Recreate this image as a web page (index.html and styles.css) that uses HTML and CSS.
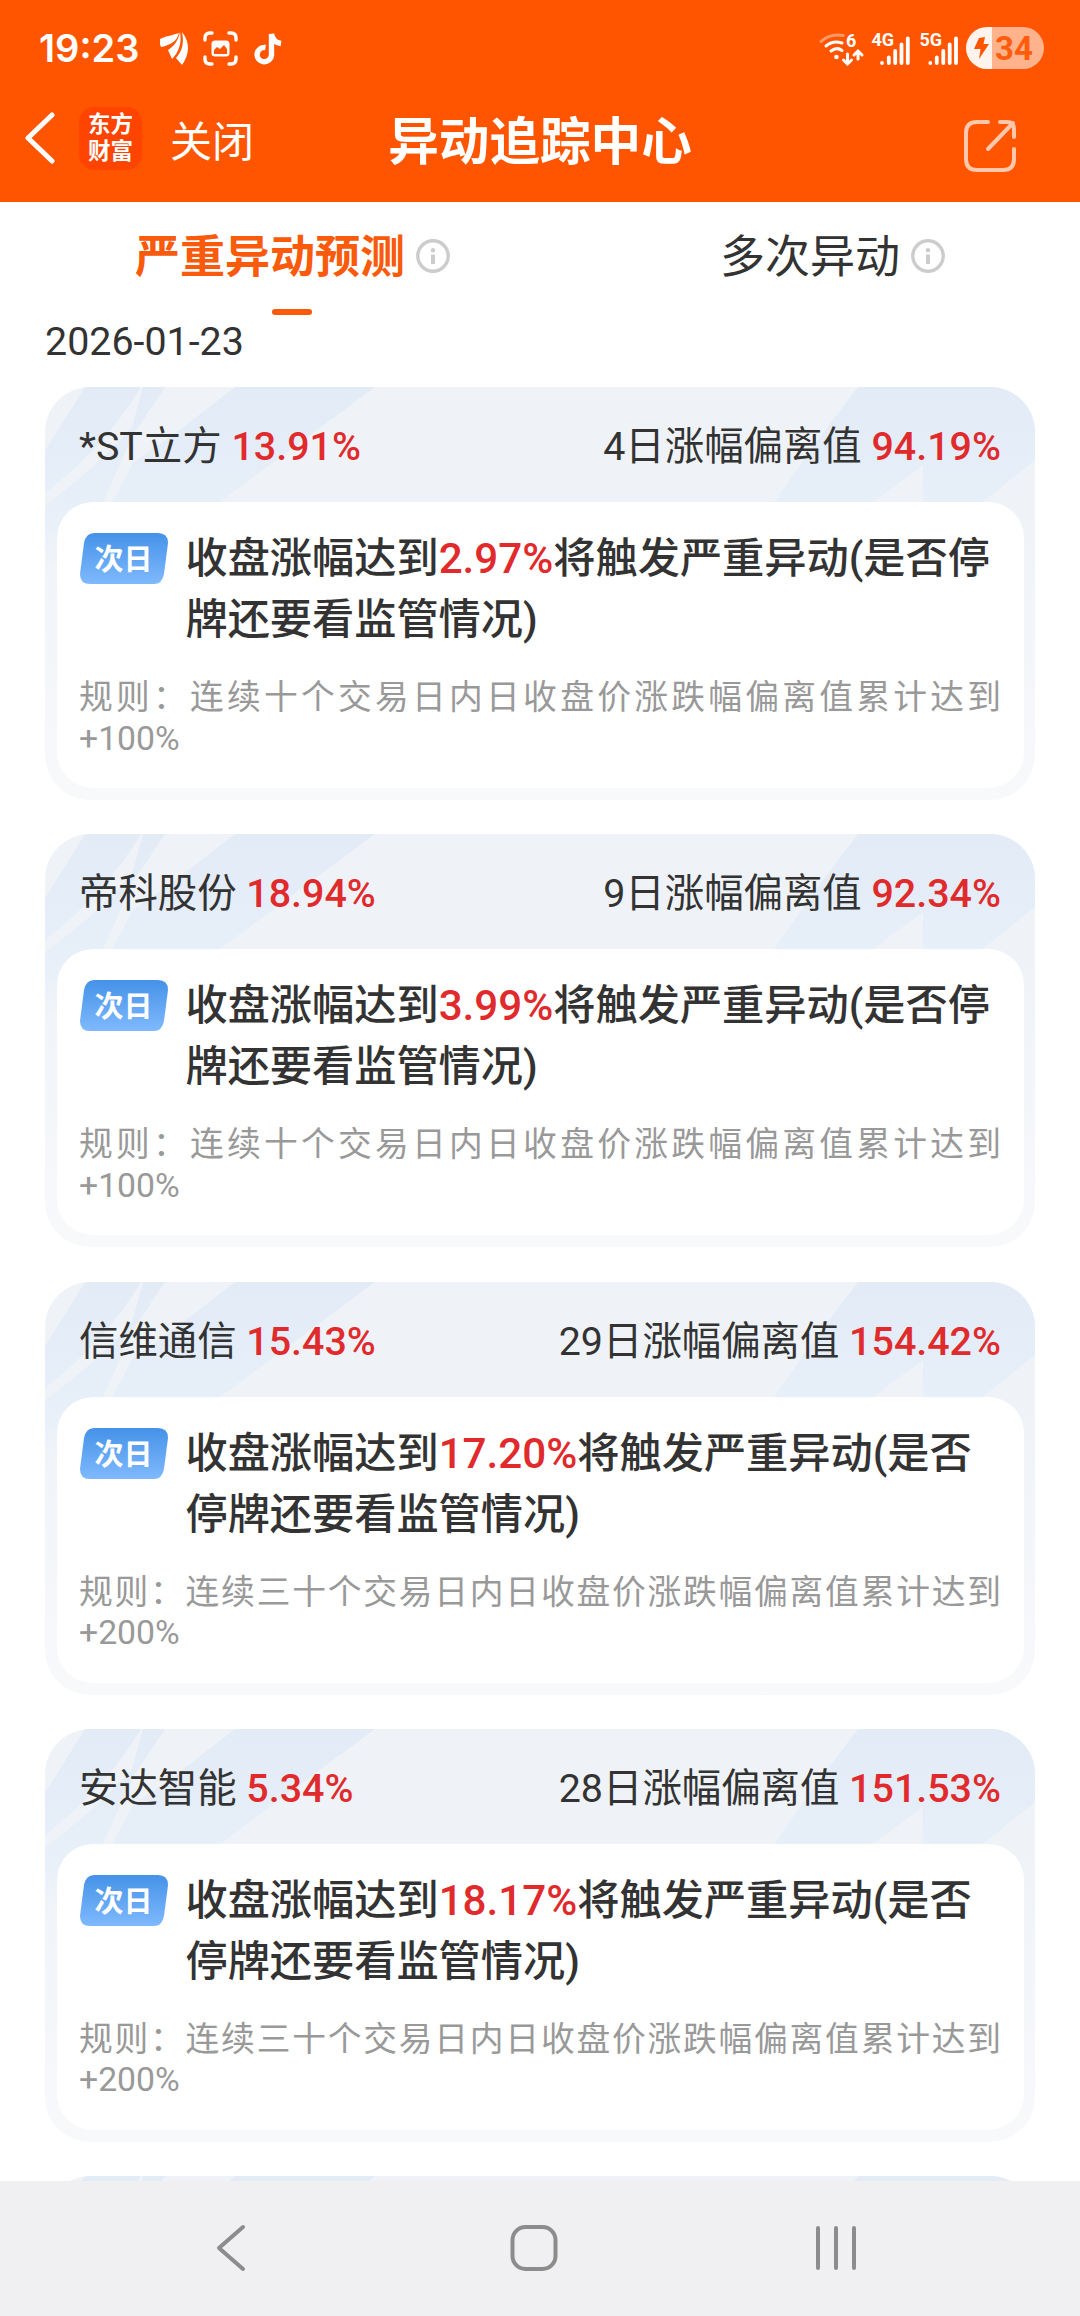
FILE: index.html
```html
<!DOCTYPE html>
<html lang="zh-CN">
<head>
    <meta charset="UTF-8">
    <meta name="viewport" content="width=device-width, initial-scale=1.0">
    <title>异动追踪中心</title>
    <link rel="stylesheet" href="styles.css">
</head>
<body>
    <header class="top">
        <!-- Status bar -->
        <div class="status-bar">
            <span class="time">19:23</span>
            <svg class="status-left" width="122" height="36" viewBox="0 0 122 36" fill="#fff">
                <path d="M0 9C6 6 14 5 19 3C17 11 11 15 1 17Q-1 13 0 9Z"/>
                <path d="M8 20C14 16 18 11 20 2C22 13 19 22 12 29Z"/>
                <path d="M22 2C31 13 29 25 22 35L16 28C23 20 24 12 22 2Z"/>
                <g fill="none" stroke="#fff" stroke-width="3.4" stroke-linecap="round">
                    <path d="M45 10V8Q45 3 50 3H52"/>
                    <path d="M69 3H71Q76 3 76 8V10"/>
                    <path d="M76 27V29Q76 34 71 34H69"/>
                    <path d="M52 34H50Q45 34 45 29V27"/>
                </g>
                <rect x="51.500" y="10.500" width="18" height="16" rx="3.500"/>
                <path fill="#ff5500" d="M54 24V20L57 17L60 19L64 15L67 19V24Z"/>
                <path fill="none" stroke="#fff" stroke-width="5.400" d="M105.500 17.500A7.200 7.200 0 1 0 111.500 25V4Q113 12.500 121 13.500"/>
            </svg>
            <svg class="status-right" width="143" height="42" viewBox="0 0 143 42" fill="#fff">
                <g fill="none" stroke="#fff" stroke-width="3" stroke-linecap="round">
                    <path stroke-opacity=".4" d="M2 14.500Q11 6 24 8.500"/>
                    <path d="M7 19Q14 13 23 16"/>
                    <path d="M12 24Q18 19.500 23 23.500"/>
                    <path d="M28.500 27V36M24.500 33L28.500 37L32.500 33M39 32V25M35 28L39 24L43 28"/>
                </g>
                <circle cx="17.500" cy="30" r="2.300"/>
                <text x="27" y="20" class="net-label">6</text>
                <text x="52.500" y="19" class="net-label">4G</text>
                <text x="100.500" y="19" class="net-label">5G</text>
                <g fill="none" stroke="#fff" stroke-width="3.800" stroke-linecap="round">
                    <path d="M63 36V36M69.800 36V30.500M76.200 36V24M82.500 36V17.500M88.800 36V11.500"/>
                    <path d="M111.300 36V36M117.800 36V30.500M124.300 36V24M130.700 36V17.500M137 36V11.500"/>
                </g>
            </svg>
            <div class="battery">
                <svg width="15" height="22" viewBox="0 0 15 22" fill="#ff5500"><path d="M5 1L11 0L9.500 7H15L5 22L6.500 12H0Z"/></svg>
                <span>34</span>
            </div>
        </div>

        <!-- Title bar -->
        <nav class="title-bar">
            <svg class="back" width="30" height="52" viewBox="0 0 30 52" fill="none" stroke="#fff" stroke-width="5" stroke-linecap="round" stroke-linejoin="round"><path d="M27 3L3 26L27 49"/></svg>
            <div class="logo">东方<br>财富</div>
            <span class="close">关闭</span>
            <h1>异动追踪中心</h1>
            <svg class="share" width="52" height="52" viewBox="0 0 52 52" fill="none" stroke="#ffc8ac" stroke-width="4" stroke-linecap="round"><path d="M24 2H13Q2 2 2 13V39Q2 50 13 50H39Q50 50 50 39V29M36 2H43Q50 2 50 9V17M49 3L24 29"/></svg>
        </nav>
    </header>

    <!-- Tabs -->
    <div class="tabs">
        <div class="tab active">
            <span>严重异动预测</span>
            <svg width="34" height="34" viewBox="0 0 34 34"><circle cx="17" cy="17" r="15.200" fill="none" stroke="#ccc" stroke-width="3.400"/><circle cx="17" cy="11.200" r="2.200" fill="#ccc"/><path stroke="#ccc" stroke-width="4" d="M17 15.500V25"/></svg>
        </div>
        <div class="tab">
            <span>多次异动</span>
            <svg width="34" height="34" viewBox="0 0 34 34"><circle cx="17" cy="17" r="15.200" fill="none" stroke="#ccc" stroke-width="3.400"/><circle cx="17" cy="11.200" r="2.200" fill="#ccc"/><path stroke="#ccc" stroke-width="4" d="M17 15.500V25"/></svg>
        </div>
    </div>

    <main class="list" id="stockList">
        <div class="date">2026-01-23</div>
    </main>

    <!-- System navigation -->
    <footer class="nav-bar">
        <svg width="32" height="48" viewBox="0 0 32 48"><path d="M28 3L4 24L28 45"/></svg>
        <svg width="48" height="48" viewBox="0 0 48 48"><rect x="2.500" y="3" width="43" height="42" rx="13"/></svg>
        <svg width="42" height="48" viewBox="0 0 42 48"><path d="M3 4V44M21 4V44M39 4V44"/></svg>
    </footer>

    <script src="script.js"></script>
</body>
</html>
```

FILE: styles.css
```css
/* Body style */
body {
    display: flex;
    flex-direction: column;
    height: 2316px;
    margin: 0;
    font-family: Roboto, "Noto Sans CJK SC", sans-serif;
    color: #333;
    background-color: #fff;
    overflow: hidden;
}

svg {
    display: block;
    flex: none;
}

/* Header */
.top {
    height: 202px;
    background-color: #ff5500;
    color: #fff;
}

.status-bar {
    display: flex;
    align-items: center;
    height: 96px;
    padding: 0 36px 0 39px;
}

.time {
    width: 121px;
    font: 600 38px Inter, sans-serif;
}

.status-right {
    margin-left: auto;
}

.net-label {
    font: 700 18px Roboto, sans-serif;
}

.battery {
    display: flex;
    align-items: center;
    gap: 6px;
    box-sizing: border-box;
    width: 78px;
    height: 42px;
    margin-left: 4px;
    padding-left: 8px;
    border-radius: 21px;
    background: linear-gradient(to right, #fff3ed 26px, #ffb38c 26px);
    color: #ff5d0c;
    font: 700 33px Roboto, sans-serif;
}

.title-bar {
    position: relative;
    display: flex;
    align-items: center;
    height: 84px;
    padding: 0 64px 0 25px;
}

.logo {
    box-sizing: border-box;
    width: 63px;
    height: 63px;
    margin-left: 24px;
    padding-top: 4px;
    border-radius: 15px;
    background-color: #ff4400;
    font-size: 22.5px;
    font-weight: 700;
    line-height: 27px;
    text-align: center;
}

.close {
    margin-top: 10px;
    margin-left: 28px;
    font-size: 42px;
    line-height: 60px;
}

.title-bar h1 {
    position: absolute;
    top: 10px;
    left: 0;
    right: 0;
    margin: 0;
    font-size: 50.6px;
    font-weight: 700;
    line-height: 74px;
    text-align: center;
}

.share {
    margin-left: auto;
    margin-top: 16px;
}

/* Tabs */
.tabs {
    display: flex;
    flex: none;
    justify-content: space-around;
    height: 120px;
}

.tab {
    position: relative;
    display: flex;
    align-items: center;
    gap: 11px;
    height: 108px;
    font-size: 45px;
}

.tab span {
    margin-bottom: 5px;
}

.tab.active {
    color: #f95a0c;
    font-weight: 700;
}

.tab.active::after {
    content: "";
    position: absolute;
    left: 50%;
    bottom: -5px;
    width: 40px;
    height: 6px;
    margin-left: -20px;
    border-radius: 3px;
    background-color: #f95a0c;
}

/* Stock list */
.list {
    flex: 1;
    min-height: 0;
    padding: 0 45px;
    overflow: hidden;
}

.date {
    height: 40px;
    margin-bottom: 25px;
    font-size: 39.4px;
    line-height: 40px;
}

.card {
    position: relative;
    box-sizing: border-box;
    height: 413px;
    margin-bottom: 34.25px;
    padding: 0 11.5px 12px;
    border-radius: 45px;
    background: linear-gradient(#eff3f8 30%, #f8f9fb);
    overflow: hidden;
}

.card-bg {
    position: absolute;
    top: 0;
    left: 0;
}

.card-head {
    position: relative;
    display: flex;
    justify-content: space-between;
    height: 115px;
    padding: 0 22.5px;
    font-size: 39.4px;
    line-height: 120px;
}

.red {
    color: #e02a2c;
    font-weight: 500;
}

.card-body {
    position: relative;
    box-sizing: border-box;
    height: 286px;
    padding: 26px 22.5px 0;
    border-radius: 36px;
    background-color: #fff;
}

.forecast {
    display: flex;
    height: 122px;
    font-size: 42.2px;
    font-weight: 500;
    line-height: 61px;
}

.badge {
    flex: none;
    width: 88px;
    height: 51px;
    margin: 5px 17.5px 0 1px;
}

.badge text {
    font-size: 29px;
    font-weight: 700;
}

.rule {
    margin-top: 28px;
    color: #999;
    font-size: 33.75px;
    line-height: 40.5px;
    text-align: justify;
}

/* System navigation */
.nav-bar {
    display: grid;
    grid-template-columns: repeat(3, 302.5px);
    align-items: center;
    justify-items: center;
    box-sizing: border-box;
    flex: none;
    height: 135px;
    padding: 0 0 2px 80px;
    background-color: #f0f0f2;
}

.nav-bar svg {
    fill: none;
    stroke: #8c8c8c;
    stroke-width: 4;
    stroke-linecap: round;
    stroke-linejoin: round;
}
```

FILE: script.js
```js
const stocks = [
    { name: "*ST立方", change: "13.91%", days: 4, deviation: "94.19%", trigger: "2.97%", period: "十", limit: "+100%" },
    { name: "帝科股份", change: "18.94%", days: 9, deviation: "92.34%", trigger: "3.99%", period: "十", limit: "+100%" },
    { name: "信维通信", change: "15.43%", days: 29, deviation: "154.42%", trigger: "17.20%", period: "三十", limit: "+200%" },
    { name: "安达智能", change: "5.34%", days: 28, deviation: "151.53%", trigger: "18.17%", period: "三十", limit: "+200%" }
];

// Light blue streaks behind the card header
const cardBackground = `
    <svg class="card-bg" width="990" height="180" viewBox="0 0 990 180">
        <defs>
            <linearGradient id="streak" x1="0" y1="0" x2="0" y2="180" gradientUnits="userSpaceOnUse">
                <stop offset="0" stop-color="#e2ebf6"/>
                <stop offset=".65" stop-color="#e7eff9"/>
                <stop offset="1" stop-color="#e7eff9" stop-opacity="0"/>
            </linearGradient>
        </defs>
        <g fill="url(#streak)">
            <path d="M40 0H96Q60 60 0 106V64Q20 32 40 0Z"/>
            <path d="M98 0H120L88 48L58 115L30 180H0V118Q50 82 87 40Z"/>
            <path d="M190 0H330L175 115H67L88 76Q140 40 190 0Z"/>
            <path d="M813 0H990V73L938 115H878V78L828 115H729L778 46Z"/>
        </g>
    </svg>`;

const badge = `
    <svg class="badge" viewBox="0 0 88 51">
        <defs>
            <linearGradient id="badgeFill" x1="0" y1="0" x2="0" y2="1">
                <stop offset="0" stop-color="#4592e8"/>
                <stop offset="1" stop-color="#7fb9fd"/>
            </linearGradient>
        </defs>
        <path fill="url(#badgeFill)" d="M14 0H78Q88 0 88 10L84 41Q82 51 74 51H10Q0 51 0 41L4 10Q6 0 14 0Z"/>
        <text x="43.500" y="37" text-anchor="middle" fill="#fff">次日</text>
    </svg>`;

const list = document.getElementById("stockList");

stocks.forEach(stock => {
    const card = document.createElement("section");
    card.className = "card";
    card.innerHTML = `
        ${cardBackground}
        <div class="card-head">
            <span>${stock.name} <span class="red">${stock.change}</span></span>
            <span>${stock.days}日涨幅偏离值 <span class="red">${stock.deviation}</span></span>
        </div>
        <div class="card-body">
            <div class="forecast">
                ${badge}
                <div>收盘涨幅达到<span class="red">${stock.trigger}</span>将触发严重异动(是否停牌还要看监管情况)</div>
            </div>
            <div class="rule">规则：连续${stock.period}个交易日内日收盘价涨跌幅偏离值累计达到${stock.limit}</div>
        </div>
    `;
    list.appendChild(card);
});

// The next card only peeks out above the navigation bar
const nextCard = document.createElement("section");
nextCard.className = "card";
nextCard.innerHTML = cardBackground;
list.appendChild(nextCard);
```
